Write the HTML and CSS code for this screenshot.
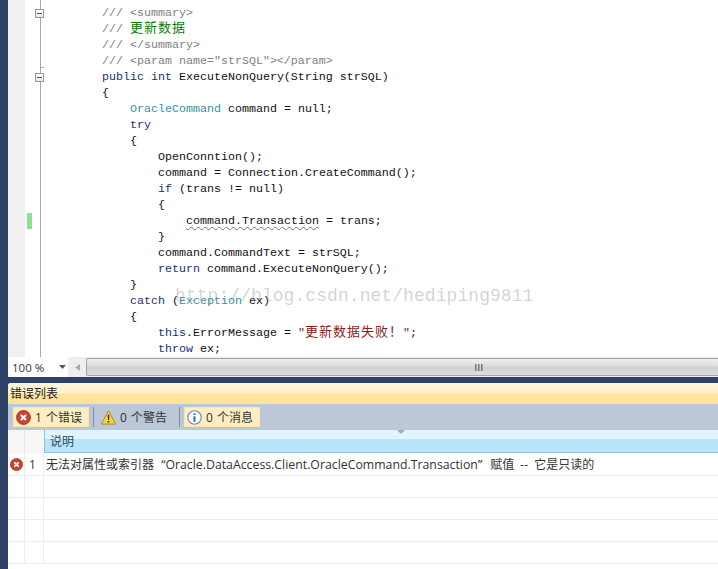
FILE: index.html
```html
<!DOCTYPE html>
<html lang="zh">
<head>
<meta charset="utf-8">
<title>错误列表</title>
<link rel="stylesheet" href="styles.css">
</head>
<body>
<div class="ide">
  <section class="editor">
    <div class="editor-body">
      <div class="margin"></div>
      <div class="lines">
        <div class="line line-top"><div class="gut"></div><div class="txt"></div></div>
        <div class="line"><div class="gut"><i class="fold"></i></div><div class="txt in2"><span class="cm">/// &lt;summary&gt;</span></div></div>
        <div class="line"><div class="gut"></div><div class="txt in2"><span class="cm">/// </span><span class="cj gr">更新数据</span></div></div>
        <div class="line"><div class="gut"></div><div class="txt in2"><span class="cm">/// &lt;/summary&gt;</span></div></div>
        <div class="line"><div class="gut"><i class="tick"></i></div><div class="txt in2"><span class="cm">/// &lt;param name="strSQL"&gt;&lt;/param&gt;</span></div></div>
        <div class="line"><div class="gut"><i class="fold"></i></div><div class="txt in2"><span class="kw">public int</span> ExecuteNonQuery(String strSQL)</div></div>
        <div class="line"><div class="gut"></div><div class="txt in2">{</div></div>
        <div class="line"><div class="gut"></div><div class="txt in3"><span class="ty">OracleCommand</span> command = null;</div></div>
        <div class="line"><div class="gut"></div><div class="txt in3"><span class="kw">try</span></div></div>
        <div class="line"><div class="gut"></div><div class="txt in3">{</div></div>
        <div class="line"><div class="gut"></div><div class="txt in4">OpenConntion();</div></div>
        <div class="line"><div class="gut"></div><div class="txt in4">command = Connection.CreateCommand();</div></div>
        <div class="line"><div class="gut"></div><div class="txt in4"><span class="kw">if</span> (trans != null)</div></div>
        <div class="line"><div class="gut"></div><div class="txt in4">{</div></div>
        <div class="line"><div class="gut"><i class="change"></i></div><div class="txt in5"><span class="squiggle">command.Transaction</span> = trans;</div></div>
        <div class="line"><div class="gut"></div><div class="txt in4">}</div></div>
        <div class="line"><div class="gut"></div><div class="txt in4">command.CommandText = strSQL;</div></div>
        <div class="line"><div class="gut"></div><div class="txt in4"><span class="kw">return</span> command.ExecuteNonQuery();</div></div>
        <div class="line"><div class="gut"></div><div class="txt in3">}</div></div>
        <div class="line"><div class="gut"></div><div class="txt in3"><span class="kw">catch</span> (<span class="ty">Exception</span> ex)</div></div>
        <div class="line"><div class="gut"></div><div class="txt in3">{</div></div>
        <div class="line"><div class="gut"></div><div class="txt in4"><span class="kw">this</span>.ErrorMessage = <span class="st">"<span class="cj">更新数据失败！</span>"</span>;</div></div>
        <div class="line"><div class="gut"></div><div class="txt in4"><span class="kw">throw</span> ex;</div></div>
      </div>
      <div class="watermark">http://blog.csdn.net/hediping9811</div>
    </div>
    <div class="hbar">
      <div class="zoom-box"><span>100 %</span><svg class="caret" width="7" height="4" viewBox="0 0 7 4"><path d="M0 0h7L3.5 4z"/></svg></div>
      <div class="scroll-left"><svg width="5" height="7" viewBox="0 0 5 7"><path d="M5 0v7L0 3.5z"/></svg></div>
      <div class="thumb"><svg width="8" height="7" viewBox="0 0 8 7"><path d="M0 0h1.5v7H0zM3 0h1.5v7H3zM6 0h1.5v7H6z"/></svg></div>
    </div>
  </section>
  <section class="errors">
    <header class="errors-title">错误列表</header>
    <div class="toolbar">
      <div class="tbtn on">
        <svg class="ico" width="15" height="15" viewBox="0 0 16 16"><circle cx="8" cy="8" r="7.4" fill="#c8442e" stroke="#a8331f"/><path d="M5.3 5.3l5.4 5.4M10.7 5.3l-5.4 5.4" stroke="#fff" stroke-width="2.2"/></svg>
        <span>1 个错误</span>
      </div>
      <div class="tsep"></div>
      <div class="tbtn">
        <svg class="ico" width="15" height="15" viewBox="0 0 16 16"><path d="M8 .8L15.6 15H.4z" fill="#f5d33c" stroke="#a98a1e"/><path d="M7.1 5h1.8l-.3 5.6H7.4zM7.1 11.6h1.8v1.8H7.1z" fill="#333"/></svg>
        <span>0 个警告</span>
      </div>
      <div class="tsep"></div>
      <div class="tbtn on">
        <svg class="ico" width="15" height="15" viewBox="0 0 16 16"><circle cx="8" cy="8" r="7.2" fill="#fff" stroke="#6b8fc4" stroke-width="1.3"/><path d="M7 3.4h2v2H7zM7 6.6h2v6H7z" fill="#2f62ad"/></svg>
        <span>0 个消息</span>
      </div>
    </div>
    <div class="thead">
      <div class="c1"></div>
      <div class="c2"></div>
      <div class="c3">说明<svg class="sort" width="8" height="4" viewBox="0 0 8 4"><path d="M0 0h8L4 4z"/></svg></div>
    </div>
    <div class="trow trow-first">
      <div class="c1"><svg width="13" height="13" viewBox="0 0 16 16"><circle cx="8" cy="8" r="7.4" fill="#c8442e" stroke="#a8331f"/><path d="M5.3 5.3l5.4 5.4M10.7 5.3l-5.4 5.4" stroke="#fff" stroke-width="2.2"/></svg></div>
      <div class="c2">1</div>
      <div class="c3">无法对属性或索引器 <span class="quoted">“Oracle.DataAccess.Client.OracleCommand.Transaction”</span> 赋值 <span class="dash">--</span> 它是只读的</div>
    </div>
    <div class="trow"><div class="c1"></div><div class="c2"></div><div class="c3"></div></div>
    <div class="trow"><div class="c1"></div><div class="c2"></div><div class="c3"></div></div>
    <div class="trow"><div class="c1"></div><div class="c2"></div><div class="c3"></div></div>
    <div class="trow"><div class="c1"></div><div class="c2"></div><div class="c3"></div></div>
  </section>
</div>
</body>
</html>
```
FILE: styles.css
```css
* { box-sizing: border-box; }
html, body { margin: 0; padding: 0; }
body { width: 718px; height: 569px; overflow: hidden; background: #2d4266; }
.ide {
  height: 569px;
  padding-left: 8px;
  display: flex;
  flex-direction: column;
  gap: 6px;
  background: #2d4266;
  font-family: "Open Sans", "Noto Sans CJK SC", sans-serif;
}
.editor { background: #fff; border-bottom-left-radius: 3px; height: 377px; display: flex; flex-direction: column; }
.editor-body { position: relative; display: flex; height: 357px; overflow: hidden; }
.margin { width: 17px; background: #f0f0f0; flex: none; }
.lines { flex: 1; font-family: "Liberation Mono", "Noto Sans CJK SC", monospace; font-size: 11.67px; color: #111; }
.line { display: flex; height: 16px; }
.line-top { height: 5px; }
.gut { width: 15px; flex: none; position: relative; }
.txt { flex: 1; border-left: 1px solid #a8a8a8; white-space: pre; line-height: 16px; }
.in2 { padding-left: 61px; }
.in3 { padding-left: 89px; }
.in4 { padding-left: 117px; }
.in5 { padding-left: 145px; }
.cm { color: #808080; }
.gr { color: #0a7a0a; }
.kw { color: #1a2f70; }
.ty { color: #3a8f9f; }
.st { color: #8a1c1c; }
.cj { font-size: 13px; letter-spacing: 1px; }
.squiggle { text-decoration: underline wavy #6a6ad0 1px; text-underline-offset: 2px; }
.fold {
  position: absolute;
  left: 10px;
  top: 4px;
  width: 9px;
  height: 9px;
  border: 1px solid #9a9a9a;
  background: linear-gradient(#fff, #e8e8e8);
}
.fold::after { content: ""; position: absolute; left: 1px; right: 1px; top: 3px; height: 1px; background: #555; }
.tick { position: absolute; left: 15px; bottom: 1px; width: 4px; height: 1px; background: #a8a8a8; }
.change { position: absolute; left: 2px; top: 0; width: 5px; height: 16px; background: #8ee08e; }
.watermark {
  position: absolute;
  left: 167px;
  top: 285px;
  font-family: "Liberation Mono", monospace;
  font-size: 18px;
  letter-spacing: .06px;
  line-height: 22px;
  color: rgba(140, 140, 140, .38);
  white-space: nowrap;
}
.hbar { height: 20px; display: flex; background: #eeeeee; font-size: 11.5px; color: #333; }
.zoom-box { width: 60px; background: #fff; display: flex; align-items: center; justify-content: space-between; padding: 0 2px 0 4px; }
.caret path { fill: #555; }
.scroll-left { width: 18px; display: flex; align-items: center; justify-content: center; }
.scroll-left path { fill: #aaa; }
.thumb {
  flex: 1;
  border: 1px solid #a4a4a4;
  border-right: 0;
  border-radius: 2px 0 0 2px;
  background: linear-gradient(#efefef, #dcdcdc 45%, #cfcfcf 55%, #dedede);
  display: flex;
  align-items: center;
  justify-content: center;
  margin: 1px 0;
  padding-left: 152px;
}
.thumb path { fill: #777; }
.errors { flex: 1; background: #fff; border-top-left-radius: 3px; display: flex; flex-direction: column; overflow: hidden; font-size: 12px; color: #333; }
.errors-title { height: 21px; line-height: 21px; padding-left: 2px; font-size: 12px; color: #222; background: linear-gradient(#fff6dc, #fff2cc 45%, #ffe39c 55%, #ffe39c); }
.toolbar { height: 26px; background: #bcc7d8; display: flex; align-items: center; padding-left: 5px; }
.tbtn { height: 20px; display: flex; align-items: center; gap: 4px; padding: 0 8px 0 3px; color: #333; font-size: 12px; word-spacing: 1px; }
.tbtn.on { background: #ffeec2; border: 1px solid #ffe6a8; padding: 0 6px 0 2px; }
.tsep { width: 1px; height: 20px; background: #7f8ea6; margin: 0 4px; }
.thead { height: 23px; display: flex; }
.thead .c1, .thead .c2 { background: #f6f6f6; }
.thead .c2 { border-left: 1px solid #e6e6e6; }
.thead .c3 { position: relative; border-left: 1px solid #8fc2d8; border-bottom: 1px solid #95bfd2; background: linear-gradient(#e0f6ff 40%, #b7e6fb 40%); line-height: 23px; padding-left: 5px; font-size: 12px; color: #345; }
.sort { position: absolute; left: 352px; top: 0; }
.sort path { fill: #8fb4bf; }
.c1 { width: 16px; flex: none; display: flex; align-items: center; justify-content: center; }
.c2 { width: 20px; flex: none; padding-left: 3px; }
.c3 { flex: 1; }
.trow { height: 22px; display: flex; line-height: 22px; border-bottom: 1px solid #ececec; }
.trow-first { height: 23px; line-height: 23px; }
.trow .c2 { border-left: 1px solid #ececec; border-right: 1px solid #ececec; padding-left: 4px; }
.trow .c3 { padding-left: 2px; white-space: nowrap; }
.quoted { font-size: 12.3px; margin: 0 5px 0 4px; }
.dash { margin: 0 2.5px; letter-spacing: .5px; }
```
